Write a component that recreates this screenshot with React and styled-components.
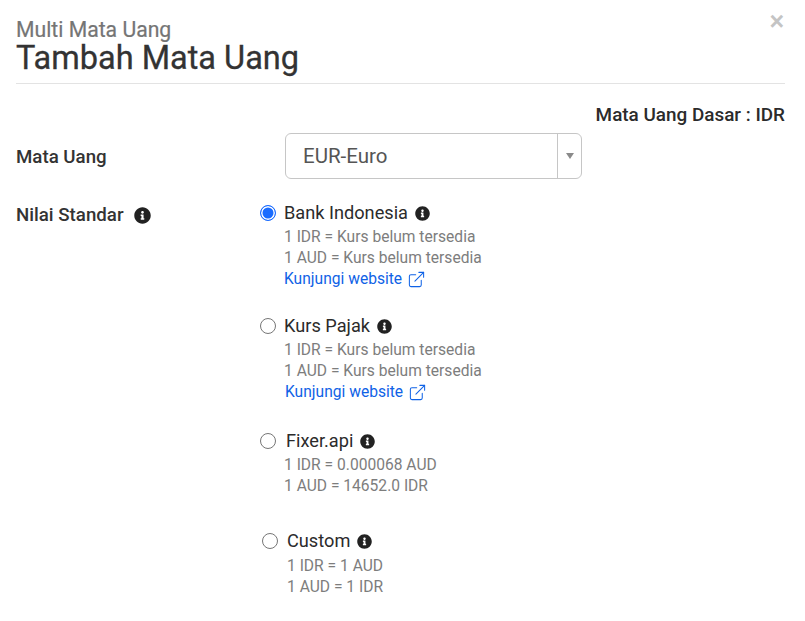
import styled, { createGlobalStyle } from 'styled-components';
import { FaInfoCircle } from 'react-icons/fa';
import { ExternalLink } from 'lucide-react';

const GlobalStyle = createGlobalStyle`
  html, body {
    margin: 0;
    background: #fff;
    font-family: Roboto, sans-serif;
  }
  * {
    box-sizing: border-box;
  }
`;

const S = {};

S.Modal = styled.div`
  position: relative;
  width: 805px;
  height: 621px;
  padding: 19px 20px 0 16px;
  overflow: hidden;
  background: #fff;
`;

S.Close = styled.button`
  position: absolute;
  top: 7px;
  right: 21px;
  padding: 0;
  border: none;
  background: none;
  color: #c4c4c4;
  font-family: "Liberation Sans", sans-serif;
  font-size: 25px;
  font-weight: 700;
  line-height: 28px;
`;

S.Header = styled.header`
  height: 65px;
  border-bottom: 1px solid #e3e3e3;
`;

S.Subtitle = styled.div`
  height: 22px;
  font-size: 21.2px;
  line-height: 22px;
  color: #757575;
  -webkit-text-stroke: 0.2px #757575;
`;

S.Title = styled.h1`
  margin: 0;
  font-size: 32.5px;
  font-weight: 400;
  line-height: 34px;
  color: #333;
  -webkit-text-stroke: 0.3px #333;
`;

S.Base = styled.div`
  margin-top: 20px;
  text-align: right;
  font-size: 18.9px;
  font-weight: 500;
  line-height: 22px;
  color: #2b2b2b;
`;

S.SelectRow = styled.div`
  display: flex;
  align-items: center;
  margin-top: 7px;
`;

S.Label = styled.div`
  display: flex;
  flex: none;
  align-items: center;
  align-self: ${p => p.$align || 'center'};
  gap: 10px;
  width: ${p => p.$width}px;
  padding-top: ${p => p.$top || 0}px;
  font-size: 18.7px;
  font-weight: 500;
  line-height: 22px;
  color: #333;
`;

S.Select = styled.div`
  display: flex;
  width: 297px;
  height: 46px;
  border: 1px solid #c6c6c6;
  border-radius: 6px;
`;

S.SelectValue = styled.div`
  flex: 1;
  padding-left: 17px;
  font-size: 20.5px;
  line-height: 45px;
  color: #555;
`;

S.SelectArrow = styled.div`
  display: flex;
  align-items: center;
  justify-content: center;
  width: 24px;
  border-left: 1px solid #c6c6c6;

  &::after {
    content: '';
    border-top: 6px solid #8a8a8a;
    border-left: 4px solid transparent;
    border-right: 4px solid transparent;
  }
`;

S.ValueRow = styled.div`
  display: flex;
  margin-top: 25px;
`;

S.Options = styled.div`
  display: flex;
  flex-direction: column;
`;

S.Option = styled.div`
  margin-left: ${p => p.$shift || 0}px;
  margin-bottom: ${p => p.$gap}px;
`;

S.OptionHead = styled.label`
  display: flex;
  align-items: center;
  height: 22px;
  margin-top: -2px;
`;

S.Radio = styled.span`
  width: 16px;
  height: 16px;
  margin-right: ${p => p.$space}px;
  border-radius: 50%;
  border: ${p => (p.$checked ? '1.5px solid #1a6cff' : '1.5px solid #767676')};
  background: ${p => (p.$checked ? '#1a6cff' : '#fff')};
  box-shadow: ${p => (p.$checked ? 'inset 0 0 0 1.5px #fff' : 'none')};
`;

S.OptionName = styled.span`
  margin-right: 7px;
  font-size: 18.2px;
  line-height: 22px;
  color: #2b2b2b;
`;

S.InfoIcon = styled(FaInfoCircle)`
  flex: none;
  width: ${p => p.$size}px;
  height: ${p => p.$size}px;
  color: #222;
`;

S.Details = styled.div`
  padding-left: ${p => p.$left || 24}px;
  padding-top: ${p => p.$top || 3}px;
`;

S.Rate = styled.div`
  font-size: 15.6px;
  line-height: 21px;
  color: #7d7d7d;
`;

S.Website = styled.a`
  display: flex;
  align-items: center;
  gap: 5px;
  height: 21px;
  margin-left: ${p => p.$shift || 0}px;
  font-size: 15.6px;
  line-height: 21px;
  color: #0f62e6;
  text-decoration: none;
`;

const options = [
  {
    name: 'Bank Indonesia',
    rates: ['1 IDR = Kurs belum tersedia', '1 AUD = Kurs belum tersedia'],
    website: true,
    checked: true,
    gap: 27,
    space: 8,
  },
  {
    name: 'Kurs Pajak',
    rates: ['1 IDR = Kurs belum tersedia', '1 AUD = Kurs belum tersedia'],
    website: true,
    linkShift: 1,
    gap: 29,
    space: 8,
  },
  {
    name: 'Fixer.api',
    rates: ['1 IDR = 0.000068 AUD', '1 AUD = 14652.0 IDR'],
    gap: 35,
    space: 10,
  },
  {
    name: 'Custom',
    rates: ['1 IDR = 1 AUD', '1 AUD = 1 IDR'],
    shift: 2,
    gap: 0,
    space: 9,
    detailLeft: 25,
    detailTop: 4,
  },
];

function App() {
  return (
    <S.Modal>
      <GlobalStyle />
      <S.Close type="button">×</S.Close>
      <S.Header>
        <S.Subtitle>Multi Mata Uang</S.Subtitle>
        <S.Title>Tambah Mata Uang</S.Title>
      </S.Header>
      <S.Base>Mata Uang Dasar : IDR</S.Base>
      <S.SelectRow>
        <S.Label $width={269} $top={1}>Mata Uang</S.Label>
        <S.Select>
          <S.SelectValue>EUR-Euro</S.SelectValue>
          <S.SelectArrow />
        </S.Select>
      </S.SelectRow>
      <S.ValueRow>
        <S.Label $width={244} $align="flex-start">
          Nilai Standar
          <S.InfoIcon $size={17} />
        </S.Label>
        <S.Options>
          {options.map(opt => (
            <S.Option key={opt.name} $shift={opt.shift} $gap={opt.gap}>
              <S.OptionHead>
                <S.Radio $checked={opt.checked} $space={opt.space} />
                <S.OptionName>{opt.name}</S.OptionName>
                <S.InfoIcon $size={15} />
              </S.OptionHead>
              <S.Details $left={opt.detailLeft} $top={opt.detailTop}>
                {opt.rates.map(rate => (
                  <S.Rate key={rate}>{rate}</S.Rate>
                ))}
                {opt.website && (
                  <S.Website href="#" $shift={opt.linkShift}>
                    Kunjungi website
                    <ExternalLink size={19} strokeWidth={1.3} />
                  </S.Website>
                )}
              </S.Details>
            </S.Option>
          ))}
        </S.Options>
      </S.ValueRow>
    </S.Modal>
  );
}

export default App;
